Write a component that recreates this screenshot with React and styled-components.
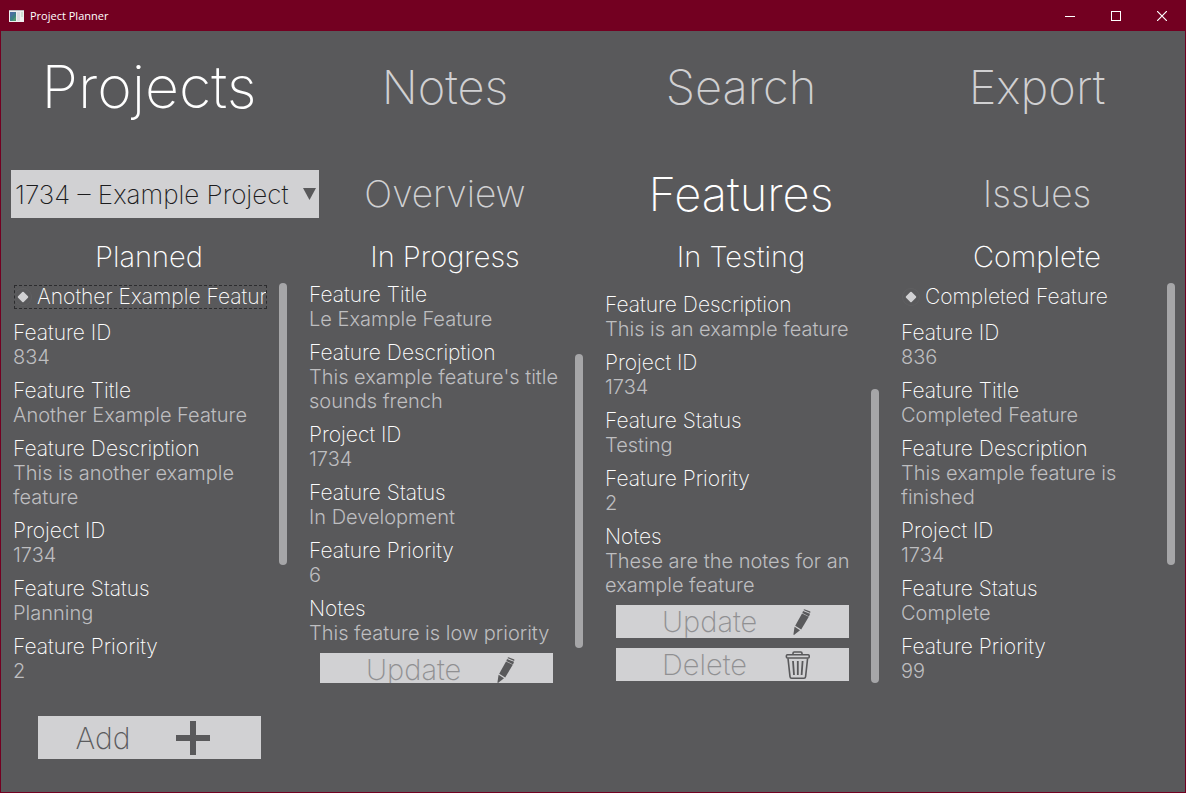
import React, { useEffect, useLayoutEffect, useRef, useState } from 'react';
import styled, { createGlobalStyle } from 'styled-components';

const color = {
  frame: '#730021',
  surface: '#59595b',
  control: '#d1d1d3',
  bright: '#ffffff',
  muted: '#d0d0d2',
  value: '#bebec0',
  disabled: '#909092',
  thumb: '#a6a6a8',
};

const GlobalStyle = createGlobalStyle`
  *, *::before, *::after { box-sizing: border-box; }
  body { margin: 0; background: ${color.surface}; font-family: Inter, "Liberation Sans", sans-serif; }
  button, select { font-family: inherit; border: 0; margin: 0; padding: 0; }
`;

const Window = styled.div`
  display: flex;
  flex-direction: column;
  height: 100vh;
  border: 1px solid ${color.frame};
  border-top: 0;
  background: ${color.surface};
`;

const TitleBar = styled.header`
  display: flex;
  flex: none;
  align-items: center;
  height: 31px;
  padding-left: 8px;
  background: ${color.frame};
  color: #fff;
`;

const AppName = styled.h1`
  flex: 1;
  margin: 0 0 0 6px;
  font: 400 11px/16px "Open Sans", "Noto Sans", sans-serif;
`;

const WindowButton = styled.button`
  display: flex;
  align-items: center;
  justify-content: center;
  width: 46px;
  height: 31px;
  background: transparent;
  color: #fff;
`;

const Grid = styled.div`
  display: grid;
  flex: none;
  grid-template-columns: repeat(4, minmax(0, 1fr));
  align-items: center;
`;

const MainNav = styled(Grid).attrs({ as: 'nav' })`
  height: 114px;
  padding-bottom: 2px;
`;

const SubNav = styled(Grid).attrs({ as: 'nav' })`
  height: 98px;
`;

const Tab = styled.button`
  background: transparent;
  text-align: center;
  color: ${(p) => (p.$active ? color.bright : color.muted)};
  font-size: ${(p) => p.$size}px;
  font-weight: 200;
  line-height: 64px;
`;

const SelectWrap = styled.div`
  position: relative;
  width: 308px;
  margin-left: 10px;
`;

const ProjectSelect = styled.select`
  appearance: none;
  display: block;
  width: 100%;
  height: 48px;
  padding: 0 20px 0 4px;
  border-radius: 0;
  background: ${color.control};
  color: #1c1c1e;
  font-size: 26px;
  font-weight: 200;
`;

const SelectArrow = styled.svg`
  position: absolute;
  top: 18px;
  right: 3px;
  pointer-events: none;
`;

const Board = styled.main`
  display: grid;
  flex: 1;
  grid-template-columns: repeat(4, minmax(0, 1fr));
  min-height: 0;
`;

const Column = styled.section`
  display: flex;
  flex-direction: column;
  min-height: 0;
`;

const ColumnTitle = styled.h2`
  flex: none;
  height: 40px;
  margin: 0;
  color: ${color.bright};
  font-size: 29px;
  font-weight: 200;
  line-height: 28px;
  text-align: center;
`;

const ScrollArea = styled.div`
  display: flex;
  flex: 1;
  min-height: 0;
  padding: 0 10px 0 12px;
`;

const Viewport = styled.div`
  flex: 1;
  min-width: 0;
  overflow-y: auto;
  scrollbar-width: none;
`;

const Track = styled.div`
  flex: none;
  width: 8px;
  margin-left: 8px;
`;

const Thumb = styled.div`
  border-radius: 4px;
  background: ${color.thumb};
`;

const Card = styled.article`
  display: flex;
  flex-direction: column;
  gap: 10px;
  padding: 2px 0;
`;

const Choice = styled.label`
  display: flex;
  align-items: center;
  gap: 5px;
  height: 24px;
  margin: 0 4px 2px 1px;
  overflow: hidden;
  outline: ${(p) => (p.$focused ? '1px dashed #2c2c2e' : 'none')};
  outline-offset: -1px;
  color: ${color.bright};
  font-size: 21px;
  font-weight: 200;
  line-height: 24px;
  white-space: nowrap;
`;

const Radio = styled.input`
  appearance: none;
  display: grid;
  flex: none;
  place-items: center;
  width: 18px;
  height: 18px;
  margin: 0;
  border: 1px solid #5f5f61;
  border-radius: 50%;
  outline: none;

  &::before {
    content: '';
    width: 8px;
    height: 8px;
    border-radius: 1px;
    background: ${color.control};
    transform: rotate(45deg);
  }
`;

const Fields = styled.dl`
  display: flex;
  flex-direction: column;
  gap: 10px;
  margin: 0;
  line-height: 24px;
`;

const Label = styled.dt`
  color: ${color.bright};
  font-size: 21px;
  font-weight: 200;
`;

const Value = styled.dd`
  margin: 0;
  color: ${color.value};
  font-size: 20px;
  font-weight: 300;
`;

const CardActions = styled.div`
  display: flex;
  flex-direction: column;
  gap: 10px;
  margin: -2px 14px 0 11px;
`;

const CardButton = styled.button`
  display: flex;
  align-items: center;
  justify-content: space-between;
  height: 33px;
  padding: 0 38px 0 46px;
  background: ${color.control};
  color: ${color.disabled};
  font-size: 29px;
  font-weight: 200;
  line-height: 33px;
`;

const Footer = styled(Grid).attrs({ as: 'footer' })`
  align-items: start;
  height: 109px;
  padding-top: 33px;
`;

const AddButton = styled.button`
  display: flex;
  align-items: center;
  gap: 46px;
  width: 223px;
  height: 43px;
  padding-left: 38px;
  justify-self: center;
  background: ${color.control};
  color: #5c5c5e;
  font-size: 30px;
  font-weight: 200;
`;

const AppIcon = () => (
  <svg width="15" height="12" viewBox="0 0 15 12" aria-hidden="true">
    <rect width="15" height="12" fill="#f0f0f0" />
    <rect width="15" height="1" fill="#b9b9bd" />
    <rect x="1" y="2" width="6" height="9" fill="#3f7f86" />
    <path d="M1 2h6L1 8z" fill="#4a70a0" />
    <path d="M7 6v5H3z" fill="#4f9a72" />
    <rect x="8" y="2" width="3" height="9" fill="#dcdce0" />
    <rect x="12" y="2" width="2" height="5" fill="#cfe0d4" />
  </svg>
);

const PencilIcon = () => (
  <svg width="26" height="26" viewBox="-3 0 26 26" fill="#59595b" aria-hidden="true">
    <path d="M15.400 1 16.400 0.200 22.400 2.600 22.200 4z" />
    <path d="M15 2 22 4.800 21 7.600 14.400 4z" />
    <path d="M14 4.400 20.800 7.800 13.200 20.400 7.200 16.800z" />
    <path d="M6.600 17.800 12 21.200 6 26 5.400 25.600z" />
  </svg>
);

const TrashIcon = () => (
  <svg width="26" height="28" viewBox="0 0 26 28" fill="none" stroke="#59595b" strokeWidth="1.600" aria-hidden="true">
    <path d="M8 3.600V2.200Q8 1 9.200 1h6.600Q17 1 17 2.200V3.600" />
    <rect x="1.400" y="3.800" width="22.800" height="3.200" rx="1" />
    <path d="M3 7.400 5 25.600Q5.200 27.200 6.600 27.200H19Q20.400 27.200 20.600 25.600L22.600 7.400" />
    <path d="M8 10 9 24M12.800 10V24M17.600 10 16.600 24" strokeWidth="1.800" />
  </svg>
);

const PlusIcon = () => (
  <svg width="34" height="34" viewBox="0 0 34 34" fill="#59595b" aria-hidden="true">
    <path d="M14 0h6v14h14v6H20v14h-6V20H0v-6h14z" />
  </svg>
);

const columns = [
  {
    title: 'Planned',
    focused: true,
    scroll: 0,
    id: '834',
    name: 'Another Example Feature',
    description: 'This is another example feature',
    status: 'Planning',
    priority: '2',
    notes: 'These are the notes for another example feature',
  },
  {
    title: 'In Progress',
    scroll: 96,
    id: '833',
    name: 'Le Example Feature',
    description: "This example feature's title sounds french",
    status: 'In Development',
    priority: '6',
    notes: 'This feature is low priority',
  },
  {
    title: 'In Testing',
    scroll: 144,
    id: '832',
    name: 'Example Feature',
    description: 'This is an example feature',
    status: 'Testing',
    priority: '2',
    notes: 'These are the notes for an example feature',
  },
  {
    title: 'Complete',
    scroll: 0,
    id: '836',
    name: 'Completed Feature',
    description: 'This example feature is finished',
    status: 'Complete',
    priority: '99',
    notes: 'These are the notes for the completed feature',
  },
];

function FeatureColumn({ feature }) {
  const viewport = useRef(null);
  const [thumb, setThumb] = useState({ height: 0, top: 0 });

  const measure = () => {
    const { clientHeight, scrollHeight, scrollTop } = viewport.current;
    const ratio = clientHeight / scrollHeight;
    setThumb({ height: Math.round(clientHeight * ratio), top: Math.round(scrollTop * ratio) });
  };

  useLayoutEffect(() => {
    viewport.current.scrollTop = feature.scroll;
    measure();
  }, [feature.scroll]);

  useEffect(() => {
    window.addEventListener('resize', measure);
    return () => window.removeEventListener('resize', measure);
  }, []);

  const fields = [
    ['Feature ID', feature.id],
    ['Feature Title', feature.name],
    ['Feature Description', feature.description],
    ['Project ID', '1734'],
    ['Feature Status', feature.status],
    ['Feature Priority', feature.priority],
    ['Notes', feature.notes],
  ];

  return (
    <Column>
      <ColumnTitle>{feature.title}</ColumnTitle>
      <ScrollArea>
        <Viewport ref={viewport} onScroll={measure}>
          <Card>
            <Choice $focused={feature.focused}>
              <Radio type="radio" name={feature.title} defaultChecked />
              {feature.name}
            </Choice>
            <Fields>
              {fields.map(([label, value]) => (
                <div key={label}>
                  <Label>{label}</Label>
                  <Value>{value}</Value>
                </div>
              ))}
            </Fields>
            <CardActions>
              <CardButton type="button">
                Update
                <PencilIcon />
              </CardButton>
              <CardButton type="button">
                Delete
                <TrashIcon />
              </CardButton>
            </CardActions>
          </Card>
        </Viewport>
        <Track>
          <Thumb style={{ height: thumb.height, marginTop: thumb.top }} />
        </Track>
      </ScrollArea>
    </Column>
  );
}

export default function App() {
  return (
    <>
      <GlobalStyle />
      <Window>
        <TitleBar>
          <AppIcon />
          <AppName>Project Planner</AppName>
          <WindowButton type="button" aria-label="Minimize">
            <svg width="10" height="10" viewBox="0 0 10 10" fill="currentColor">
              <rect y="5" width="10" height="1" />
            </svg>
          </WindowButton>
          <WindowButton type="button" aria-label="Maximize">
            <svg width="10" height="10" viewBox="0 0 10 10" fill="none" stroke="currentColor">
              <rect x="0.500" y="0.500" width="9" height="9" />
            </svg>
          </WindowButton>
          <WindowButton type="button" aria-label="Close">
            <svg width="10" height="10" viewBox="0 0 10 10" fill="none" stroke="currentColor">
              <path d="M0 0 10 10M10 0 0 10" strokeWidth="1.200" />
            </svg>
          </WindowButton>
        </TitleBar>

        <MainNav aria-label="Main">
          <Tab type="button" $size={59} $active>Projects</Tab>
          <Tab type="button" $size={47}>Notes</Tab>
          <Tab type="button" $size={47}>Search</Tab>
          <Tab type="button" $size={47}>Export</Tab>
        </MainNav>

        <SubNav aria-label="Project">
          <SelectWrap>
            <ProjectSelect aria-label="Project" defaultValue="1734">
              <option value="1734">1734 – Example Project</option>
            </ProjectSelect>
            <SelectArrow width="13" height="12" viewBox="0 0 13 12" aria-hidden="true">
              <path d="M0 0h13L6.500 12z" fill="#59595b" />
            </SelectArrow>
          </SelectWrap>
          <Tab type="button" $size={37}>Overview</Tab>
          <Tab type="button" $size={47} $active>Features</Tab>
          <Tab type="button" $size={37}>Issues</Tab>
        </SubNav>

        <Board>
          {columns.map((feature) => (
            <FeatureColumn key={feature.title} feature={feature} />
          ))}
        </Board>

        <Footer>
          <AddButton type="button">
            Add
            <PlusIcon />
          </AddButton>
        </Footer>
      </Window>
    </>
  );
}
